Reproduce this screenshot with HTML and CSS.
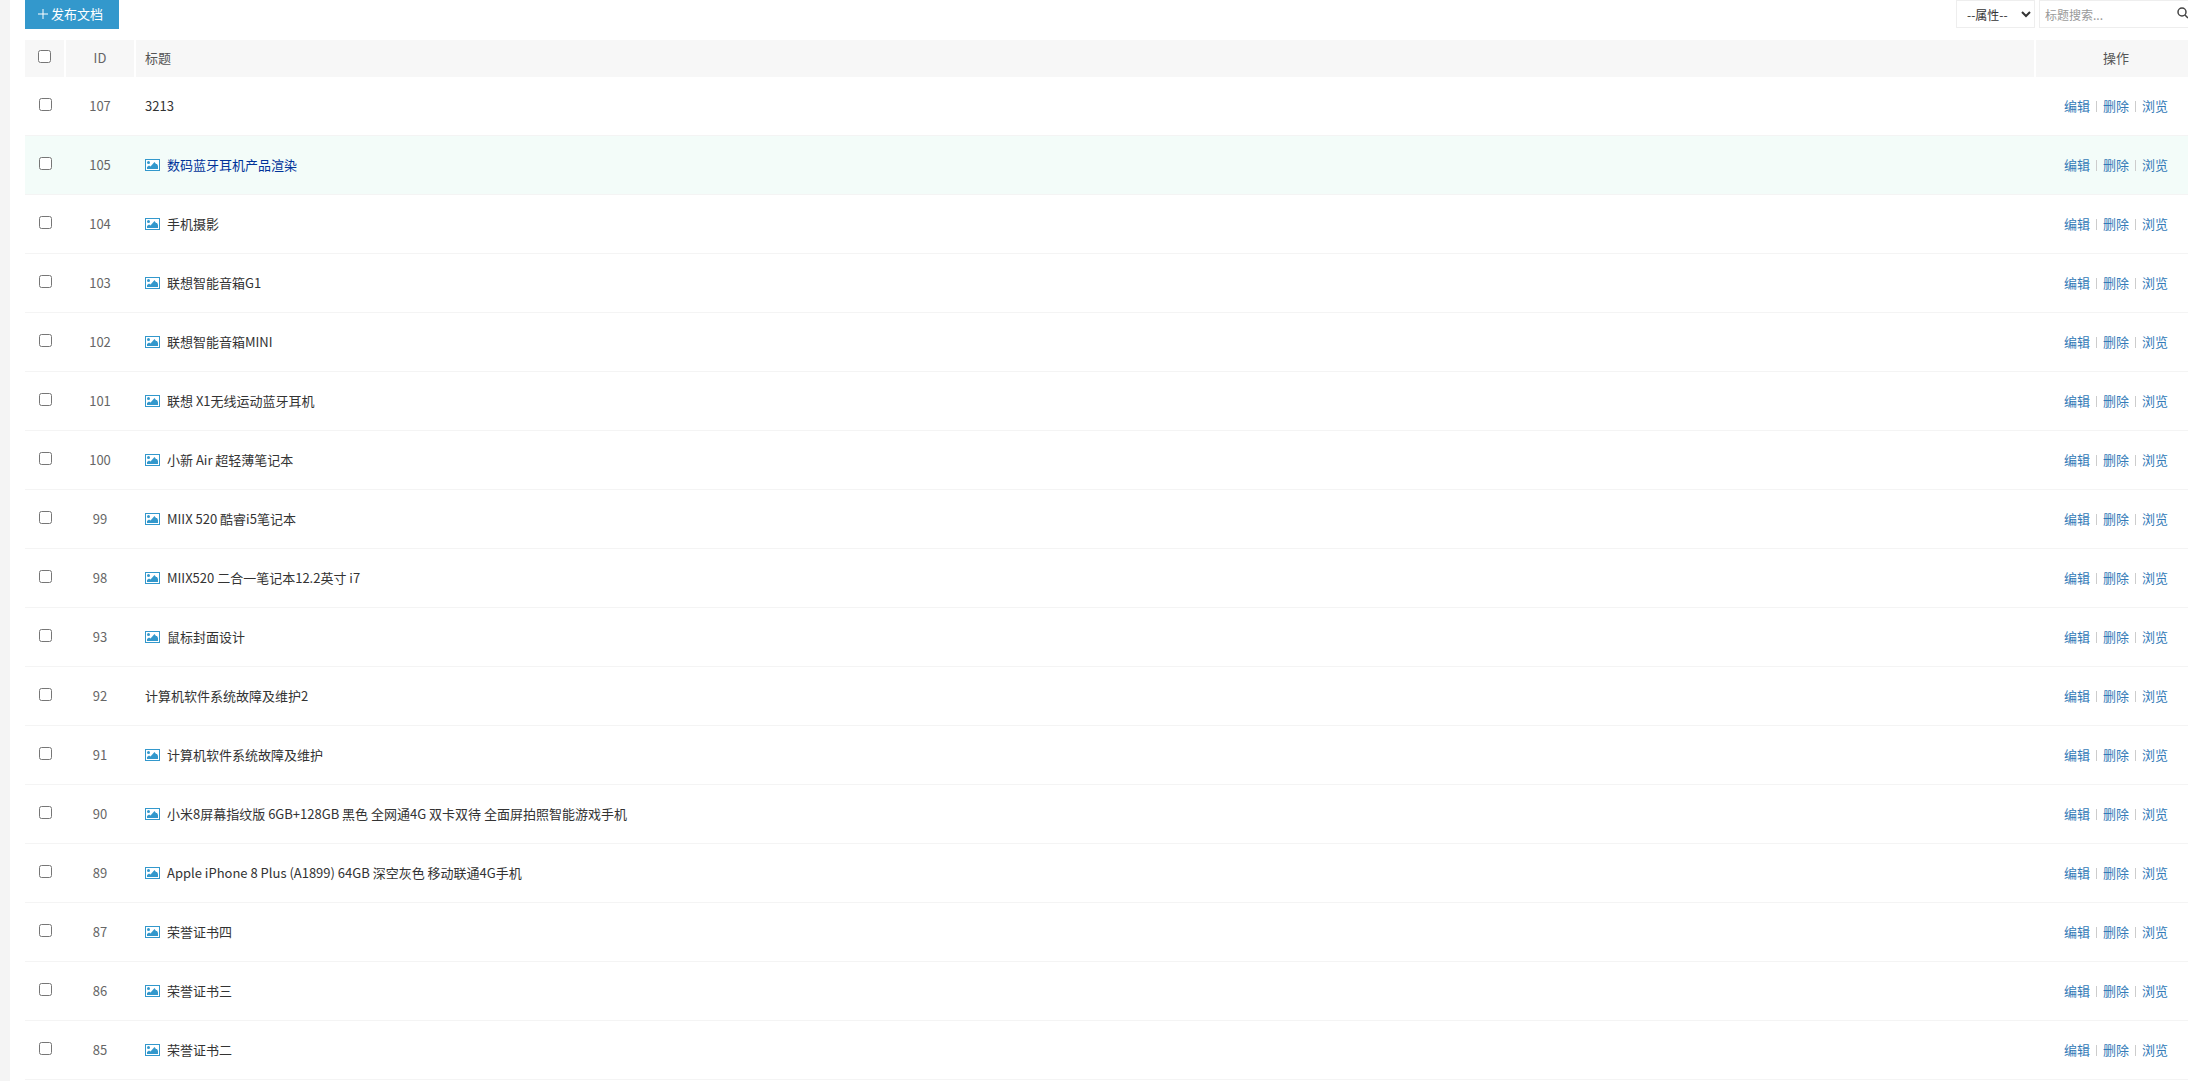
FILE: index.html
```
<!DOCTYPE html>
<html lang="zh-CN">
<head>
  <meta charset="UTF-8" />
  <meta name="viewport" content="width=device-width, initial-scale=1.0"/>
  <title>文档列表</title>
  <link rel="stylesheet" href="styles.css">
</head>
<body>

  <svg class="sprite" aria-hidden="true">
    <symbol id="icon-pic" viewBox="0 0 15 12">
      <rect x="0.5" y="0.5" width="14" height="11" fill="#fff" stroke="currentColor"/>
      <circle cx="3.5" cy="3.5" r="1.5" fill="currentColor"/>
      <path d="M2 10V8l2-1.500L5.500 7.500 9.500 3 11 5h1l1 2v3z" fill="currentColor"/>
    </symbol>
  </svg>

  <div class="page">
    <div class="toolbar">
      <button type="button" class="btn-add">
        <svg class="icon-plus" viewBox="0 0 10 10" aria-hidden="true"><path d="M5 0v10M0 5h10"/></svg>
        <span>发布文档</span>
      </button>
      <form class="search" onsubmit="return false">
        <select class="search-flag" aria-label="属性">
          <option>--属性--</option>
        </select>
        <div class="search-box">
          <input type="text" placeholder="标题搜索..." aria-label="标题搜索">
          <button type="submit" class="btn-search" aria-label="搜索">
            <svg viewBox="0 0 12 12"><circle cx="5" cy="5" r="4"/><path d="M8 8l3 3"/></svg>
          </button>
        </div>
      </form>
    </div>

    <table class="list">
      <thead>
        <tr>
          <th class="col-check"><input type="checkbox" id="checkAll" aria-label="全选"></th>
          <th class="col-id">ID</th>
          <th class="col-title">标题</th>
          <th class="col-op">操作</th>
        </tr>
      </thead>
      <tbody id="rows"></tbody>
    </table>
  </div>

  <script>
    const docs = [
      { id: 107, title: '3213', pic: false },
      { id: 105, title: '数码蓝牙耳机产品渲染', pic: true, active: true },
      { id: 104, title: '手机摄影', pic: true },
      { id: 103, title: '联想智能音箱G1', pic: true },
      { id: 102, title: '联想智能音箱MINI', pic: true },
      { id: 101, title: '联想 X1无线运动蓝牙耳机', pic: true },
      { id: 100, title: '小新 Air 超轻薄笔记本', pic: true },
      { id: 99, title: 'MIIX 520 酷睿i5笔记本', pic: true },
      { id: 98, title: 'MIIX520 二合一笔记本12.2英寸 i7', pic: true },
      { id: 93, title: '鼠标封面设计', pic: true },
      { id: 92, title: '计算机软件系统故障及维护2', pic: false },
      { id: 91, title: '计算机软件系统故障及维护', pic: true },
      { id: 90, title: '小米8屏幕指纹版 6GB+128GB 黑色 全网通4G 双卡双待 全面屏拍照智能游戏手机', pic: true },
      { id: 89, title: 'Apple iPhone 8 Plus (A1899) 64GB 深空灰色 移动联通4G手机', pic: true },
      { id: 87, title: '荣誉证书四', pic: true },
      { id: 86, title: '荣誉证书三', pic: true },
      { id: 85, title: '荣誉证书二', pic: true }
    ];

    const icon = '<svg class="icon-pic" aria-hidden="true"><use href="#icon-pic"/></svg>';

    document.getElementById('rows').innerHTML = docs.map(d => `
      <tr class="${d.active ? 'active' : ''}">
        <td class="col-check"><input type="checkbox" name="ids" value="${d.id}" aria-label="选择 ${d.id}"></td>
        <td class="col-id">${d.id}</td>
        <td class="col-title"><div class="title">${d.pic ? icon : ''}<a href="#">${d.title}</a></div></td>
        <td class="col-op"><div class="ops"><a href="#">编辑</a><i></i><a href="#">删除</a><i></i><a href="#">浏览</a></div></td>
      </tr>`).join('');

    document.getElementById('checkAll').addEventListener('change', (e) => {
      document.querySelectorAll('input[name="ids"]').forEach((el) => {
        el.checked = e.target.checked;
      });
    });
  </script>
</body>
</html>
```
FILE: styles.css
```
* {
  box-sizing: border-box;
}

body {
  margin: 0;
  min-height: 100vh;
  border-left: 10px solid #f4f4f4;
  background: #fff;
  color: #333;
  font-family: "Noto Sans CJK SC", sans-serif;
  font-size: 13px;
  line-height: 20px;
  overflow-x: hidden;
}

a {
  color: #337ab7;
  text-decoration: none;
}

button, input, select {
  font-family: inherit;
}

.sprite {
  position: absolute;
  width: 0;
  height: 0;
}

/* the list runs a little past the right edge of its frame */
.page {
  margin-left: 15px;
  margin-right: -8px;
}

.toolbar {
  display: flex;
  justify-content: space-between;
  height: 40px;
}

.btn-add {
  display: flex;
  align-items: center;
  gap: 3px;
  width: 94px;
  height: 29px;
  padding: 0 0 2px 13px;
  border: none;
  background: #3398cc;
  color: #fff;
  font-size: 13px;
  line-height: 20px;
  cursor: pointer;
}

.icon-plus {
  width: 10px;
  height: 10px;
  stroke: #fff;
  fill: none;
}

.search {
  display: flex;
  gap: 4px;
  height: 28px;
}

.search-flag {
  width: 79px;
  padding: 0 0 0 6px;
  border: 1px solid #eee;
  background: #fff;
  color: #333;
  font-size: 12px;
}

.search-box {
  display: flex;
  align-items: center;
  width: 157px;
  border: 1px solid #eee;
}

.search-box input {
  flex: 1;
  min-width: 0;
  height: 26px;
  padding: 0 5px;
  border: none;
  outline: none;
  font-size: 12px;
}

.search-box input::placeholder {
  color: #999;
}

.btn-search {
  display: flex;
  padding: 0 6px 2px 4px;
  border: none;
  background: none;
  cursor: pointer;
}

.btn-search svg {
  width: 12px;
  height: 12px;
  fill: none;
  stroke: #444;
  stroke-width: 1.5;
}

.list {
  width: 100%;
  table-layout: fixed;
  border-collapse: separate;
  border-spacing: 0;
}

.list th {
  height: 37px;
  padding: 0 0 2px;
  background: #f7f7f7;
  border-right: 2px solid #fff;
  color: #555;
  font-weight: normal;
}

.list td {
  height: 59px;
  padding: 0;
  border-bottom: 1px solid #f4f4f4;
}

.list .active td {
  background: #f3fcf9;
}

.list input {
  display: block;
  width: 13px;
  height: 13px;
  margin: 0 auto 4px;
}

.list th input {
  margin-bottom: 2px;
}

.list .col-check { width: 41px; }

.list .col-id {
  width: 70px;
  color: #666;
  text-align: center;
}

.list td.col-id {
  padding-right: 2px;
}

.list .col-title {
  padding-left: 9px;
  text-align: left;
}

.list .col-op {
  width: 160px;
  border-right: none;
  text-align: center;
}

.title {
  display: flex;
  align-items: center;
  gap: 7px;
}

.title a {
  color: #333;
}

.active .title a {
  color: #039;
}

.icon-pic {
  width: 15px;
  height: 12px;
  color: #3398cc;
}

.ops {
  display: flex;
  align-items: center;
  justify-content: center;
  gap: 6px;
}

.ops i {
  width: 1px;
  height: 11px;
  background: #ccc;
}
```
